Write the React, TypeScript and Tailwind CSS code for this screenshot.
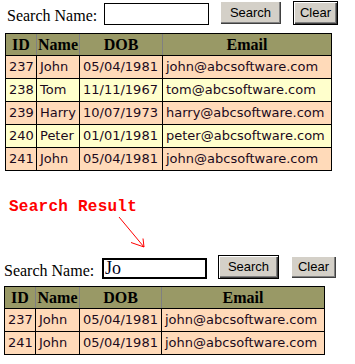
import type { ReactNode } from "react";

type Person = { id: number; name: string; dob: string; email: string; odd: boolean };

const people: Person[] = [
  { id: 237, name: "John", dob: "05/04/1981", email: "john@abcsoftware.com", odd: true },
  { id: 238, name: "Tom", dob: "11/11/1967", email: "tom@abcsoftware.com", odd: false },
  { id: 239, name: "Harry", dob: "10/07/1973", email: "harry@abcsoftware.com", odd: true },
  { id: 240, name: "Peter", dob: "01/01/1981", email: "peter@abcsoftware.com", odd: false },
  { id: 241, name: "John", dob: "05/04/1981", email: "john@abcsoftware.com", odd: true },
];

const serif = "font-['Liberation_Serif',serif]";

function WinButton({ children, isDefault, className }: { children: ReactNode; isDefault?: boolean; className: string }) {
  // classic 3D button, the default one gets a black frame
  const look = isDefault
    ? "border border-black shadow-[inset_1px_1px_#ffffff,inset_-1px_-1px_#404040,inset_-2px_-2px_#808080]"
    : "shadow-[inset_1px_1px_#ffffff,inset_-1px_-1px_#404040,inset_-2px_-2px_#808080]";
  return (
    <button
      className={`${look} ${className} bg-[#d4d0c8] flex items-center justify-center font-['Liberation_Sans',Arial,sans-serif] text-[13px] text-black p-0`}
    >
      {children}
    </button>
  );
}

function PeopleTable({ rows, widths }: { rows: Person[]; widths: number[] }) {
  const heads = ["ID", "Name", "DOB", "Email"];
  return (
    <div className="border border-black w-fit">
      <div className="flex h-[21px] bg-[#999966]">
        {heads.map((h, i) => (
          <div
            key={h}
            style={{ width: widths[i] }}
            className={`${i > 0 ? "border-l border-[#808080]" : ""} flex items-center justify-center ${serif} font-bold text-[16px] text-black leading-none`}
          >
            {h}
          </div>
        ))}
      </div>
      {rows.map((p, r) => {
        const cells = [String(p.id), p.name, p.dob, p.email];
        return (
          <div key={p.id + "-" + r} className={`flex h-[23px] border-t border-black ${p.odd ? "bg-[#ffdab9]" : "bg-[#ffffcc]"}`}>
            {cells.map((c, i) => (
              <div
                key={i}
                style={{ width: widths[i] }}
                className={`${i > 0 ? "border-l border-black" : ""} flex items-center pl-[3px] font-['DejaVu_Sans',Verdana,sans-serif] text-[13px] text-[#1c0a1c] whitespace-nowrap overflow-hidden`}
              >
                {c}
              </div>
            ))}
          </div>
        );
      })}
    </div>
  );
}

export default function App() {
  const found = people.filter((p) => p.name.toLowerCase().startsWith("jo"));

  return (
    <div className="w-[355px] h-[364px] bg-white overflow-hidden">
      {/* full list */}
      <div className="flex items-start">
        <span className={`ml-[7px] mt-[7px] w-[97px] ${serif} text-[16px] leading-[18px] text-black`}>Search Name:</span>
        <input className="mt-[3px] w-[105px] h-[22px] border border-black bg-white outline-none" />
        <WinButton className="ml-[11px] mt-[1px] w-[61px] h-[23px]">Search</WinButton>
        <WinButton isDefault className="ml-[12px] mt-[1px] w-[45px] h-[24px]">Clear</WinButton>
      </div>
      <div className="ml-[5px] mt-[8px]">
        <PeopleTable rows={people} widths={[30, 43, 83, 169]} />
      </div>

      {/* annotation */}
      <div className="ml-[9px] mt-[27px] font-['Liberation_Mono',monospace] font-bold text-[16px] leading-[18px] tracking-[0.25px] text-[#ff0000]">
        Search Result
      </div>
      <svg width="355" height="39" className="block">
        <g stroke="#ff0000" strokeWidth="1" fill="none">
          <line x1="119" y1="1" x2="144" y2="31" />
          <line x1="131" y1="26.5" x2="144" y2="31" />
          <line x1="143" y1="22.5" x2="144" y2="31" />
        </g>
      </svg>

      {/* filtered list */}
      <div className="flex items-start">
        <span className={`ml-[4px] mt-[7px] w-[98px] ${serif} text-[16px] leading-[18px] text-black`}>Search Name:</span>
        <input
          defaultValue="Jo"
          className={`mt-[3px] w-[105px] h-[21px] border-2 border-black bg-white outline-none pl-[1px] ${serif} text-[18px] text-[#000020]`}
        />
        <WinButton isDefault className="ml-[11px] w-[61px] h-[24px]">Search</WinButton>
        <WinButton className="ml-[12px] mt-[1px] w-[45px] h-[22px]">Clear</WinButton>
      </div>
      <div className="ml-[4px] mt-[6px]">
        <PeopleTable rows={found} widths={[30, 44, 82, 163]} />
      </div>
    </div>
  );
}
